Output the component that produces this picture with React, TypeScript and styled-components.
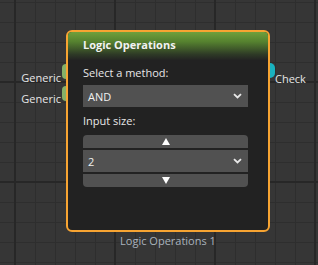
import React from "react";
import styled, { createGlobalStyle } from "styled-components";

const Global = createGlobalStyle`
  html, body { margin: 0; padding: 0; background: #353535; }
  body { font-family: "Open Sans", "Liberation Sans", sans-serif; font-size: 11px; }
`;

const Canvas = styled.div`
  position: relative;
  width: 318px;
  height: 265px;
  overflow: hidden;
  background-color: #363636;
  background-image:
    linear-gradient(to right, #272727 0 2px, transparent 2px),
    linear-gradient(to bottom, #272727 0 2px, transparent 2px),
    linear-gradient(to right, #2e2e2e 0 1px, transparent 1px),
    linear-gradient(to bottom, #2e2e2e 0 1px, transparent 1px);
  background-size: 100px 100px, 100px 100px, 20px 20px, 20px 20px;
  background-position: 14px 0, 0 81px, 15px 0, 0 2px;
`;

const Node = styled.div<{ $x: number; $y: number }>`
  position: absolute;
  left: ${(p) => p.$x}px;
  top: ${(p) => p.$y}px;
  width: 204px;
  height: 202px;
  box-sizing: border-box;
  border: 2px solid #f7a432;
  border-radius: 6px;
  background: #222222;
  display: flex;
  flex-direction: column;
`;

const Header = styled.div`
  height: 28px;
  box-sizing: border-box;
  padding: 6px 0 0 15px;
  border-radius: 4px 4px 0 0;
  background: linear-gradient(to bottom, #6fa03c 0%, #55812f 35%, #2e3a26 80%, #232323 100%);
  color: #f2f2f2;
  font-weight: 700;
  font-size: 11px;
  line-height: 14px;
`;

const Body = styled.div`
  display: flex;
  flex-direction: column;
  padding: 6px 20px 0 15px;
`;

const FieldLabel = styled.div<{ $mt?: number }>`
  color: #e8e8e8;
  line-height: 14px;
  margin-top: ${(p) => p.$mt ?? 0}px;
`;

const Select = styled.div<{ $mt?: number }>`
  display: flex;
  align-items: center;
  justify-content: space-between;
  height: 22px;
  margin-top: ${(p) => p.$mt ?? 0}px;
  padding: 0 6px 0 5px;
  background: #515151;
  color: #f0f0f0;
`;

const Stepper = styled.div`
  display: flex;
  flex-direction: column;
  gap: 2px;
  margin-top: 7px;
`;

const StepButton = styled.div<{ $dir: "up" | "down" }>`
  height: 13px;
  display: flex;
  align-items: center;
  justify-content: center;
  background: #515151;
  border-radius: ${(p) => (p.$dir === "up" ? "4px 4px 0 0" : "0 0 4px 4px")};
`;

const Port = styled.div<{ $side: "left" | "right"; $top: number; $color: string }>`
  position: absolute;
  top: ${(p) => p.$top}px;
  ${(p) => (p.$side === "left" ? "left: -6px;" : "right: -7px;")}
  width: ${(p) => (p.$side === "left" ? 4 : 5)}px;
  height: 15px;
  background: ${(p) => p.$color};
  border-radius: ${(p) => (p.$side === "left" ? "7px 0 0 7px" : "0 7px 7px 0")};
`;

const PortLabel = styled.div<{ $side: "left" | "right"; $top: number }>`
  position: absolute;
  top: ${(p) => p.$top}px;
  ${(p) => (p.$side === "left" ? "right: calc(100% + 7px);" : "left: calc(100% + 7px);")}
  color: #e6e6e6;
  line-height: 14px;
  white-space: nowrap;
`;

const Caption = styled.div`
  position: absolute;
  top: calc(100% + 4px);
  left: 0;
  right: 0;
  text-align: center;
  color: #aab3bd;
  line-height: 14px;
  white-space: nowrap;
`;

const Chevron = () => (
  <svg width="9" height="6" viewBox="0 0 9 6">
    <path d="M1 1.2 L4.5 4.5 L8 1.2" fill="none" stroke="#e8e8e8" strokeWidth="1.8" />
  </svg>
);

const Triangle = ({ up }: { up: boolean }) => (
  <svg width="8" height="7" viewBox="0 0 8 7">
    <path d={up ? "M4 0 L8 7 L0 7 Z" : "M0 0 L8 0 L4 7 Z"} fill="#ffffff" />
  </svg>
);

export default function App() {
  return (
    <>
      <Global />
      <Canvas>
        <Node $x={66} $y={30}>
          <Port $side="left" $top={32} $color="#86b167" />
          <Port $side="left" $top={54} $color="#86b167" />
          <Port $side="right" $top={31} $color="#1ab2bf" />
          <PortLabel $side="left" $top={39}>Generic</PortLabel>
          <PortLabel $side="left" $top={60}>Generic</PortLabel>
          <PortLabel $side="right" $top={40}>Check</PortLabel>
          <Header>Logic Operations</Header>
          <Body>
            <FieldLabel>Select a method:</FieldLabel>
            <Select $mt={5}>
              <span>AND</span>
              <Chevron />
            </Select>
            <FieldLabel $mt={7}>Input size:</FieldLabel>
            <Stepper>
              <StepButton $dir="up">
                <Triangle up />
              </StepButton>
              <Select>
                <span>2</span>
                <Chevron />
              </Select>
              <StepButton $dir="down">
                <Triangle up={false} />
              </StepButton>
            </Stepper>
          </Body>
          <Caption>Logic Operations 1</Caption>
        </Node>
      </Canvas>
    </>
  );
}
